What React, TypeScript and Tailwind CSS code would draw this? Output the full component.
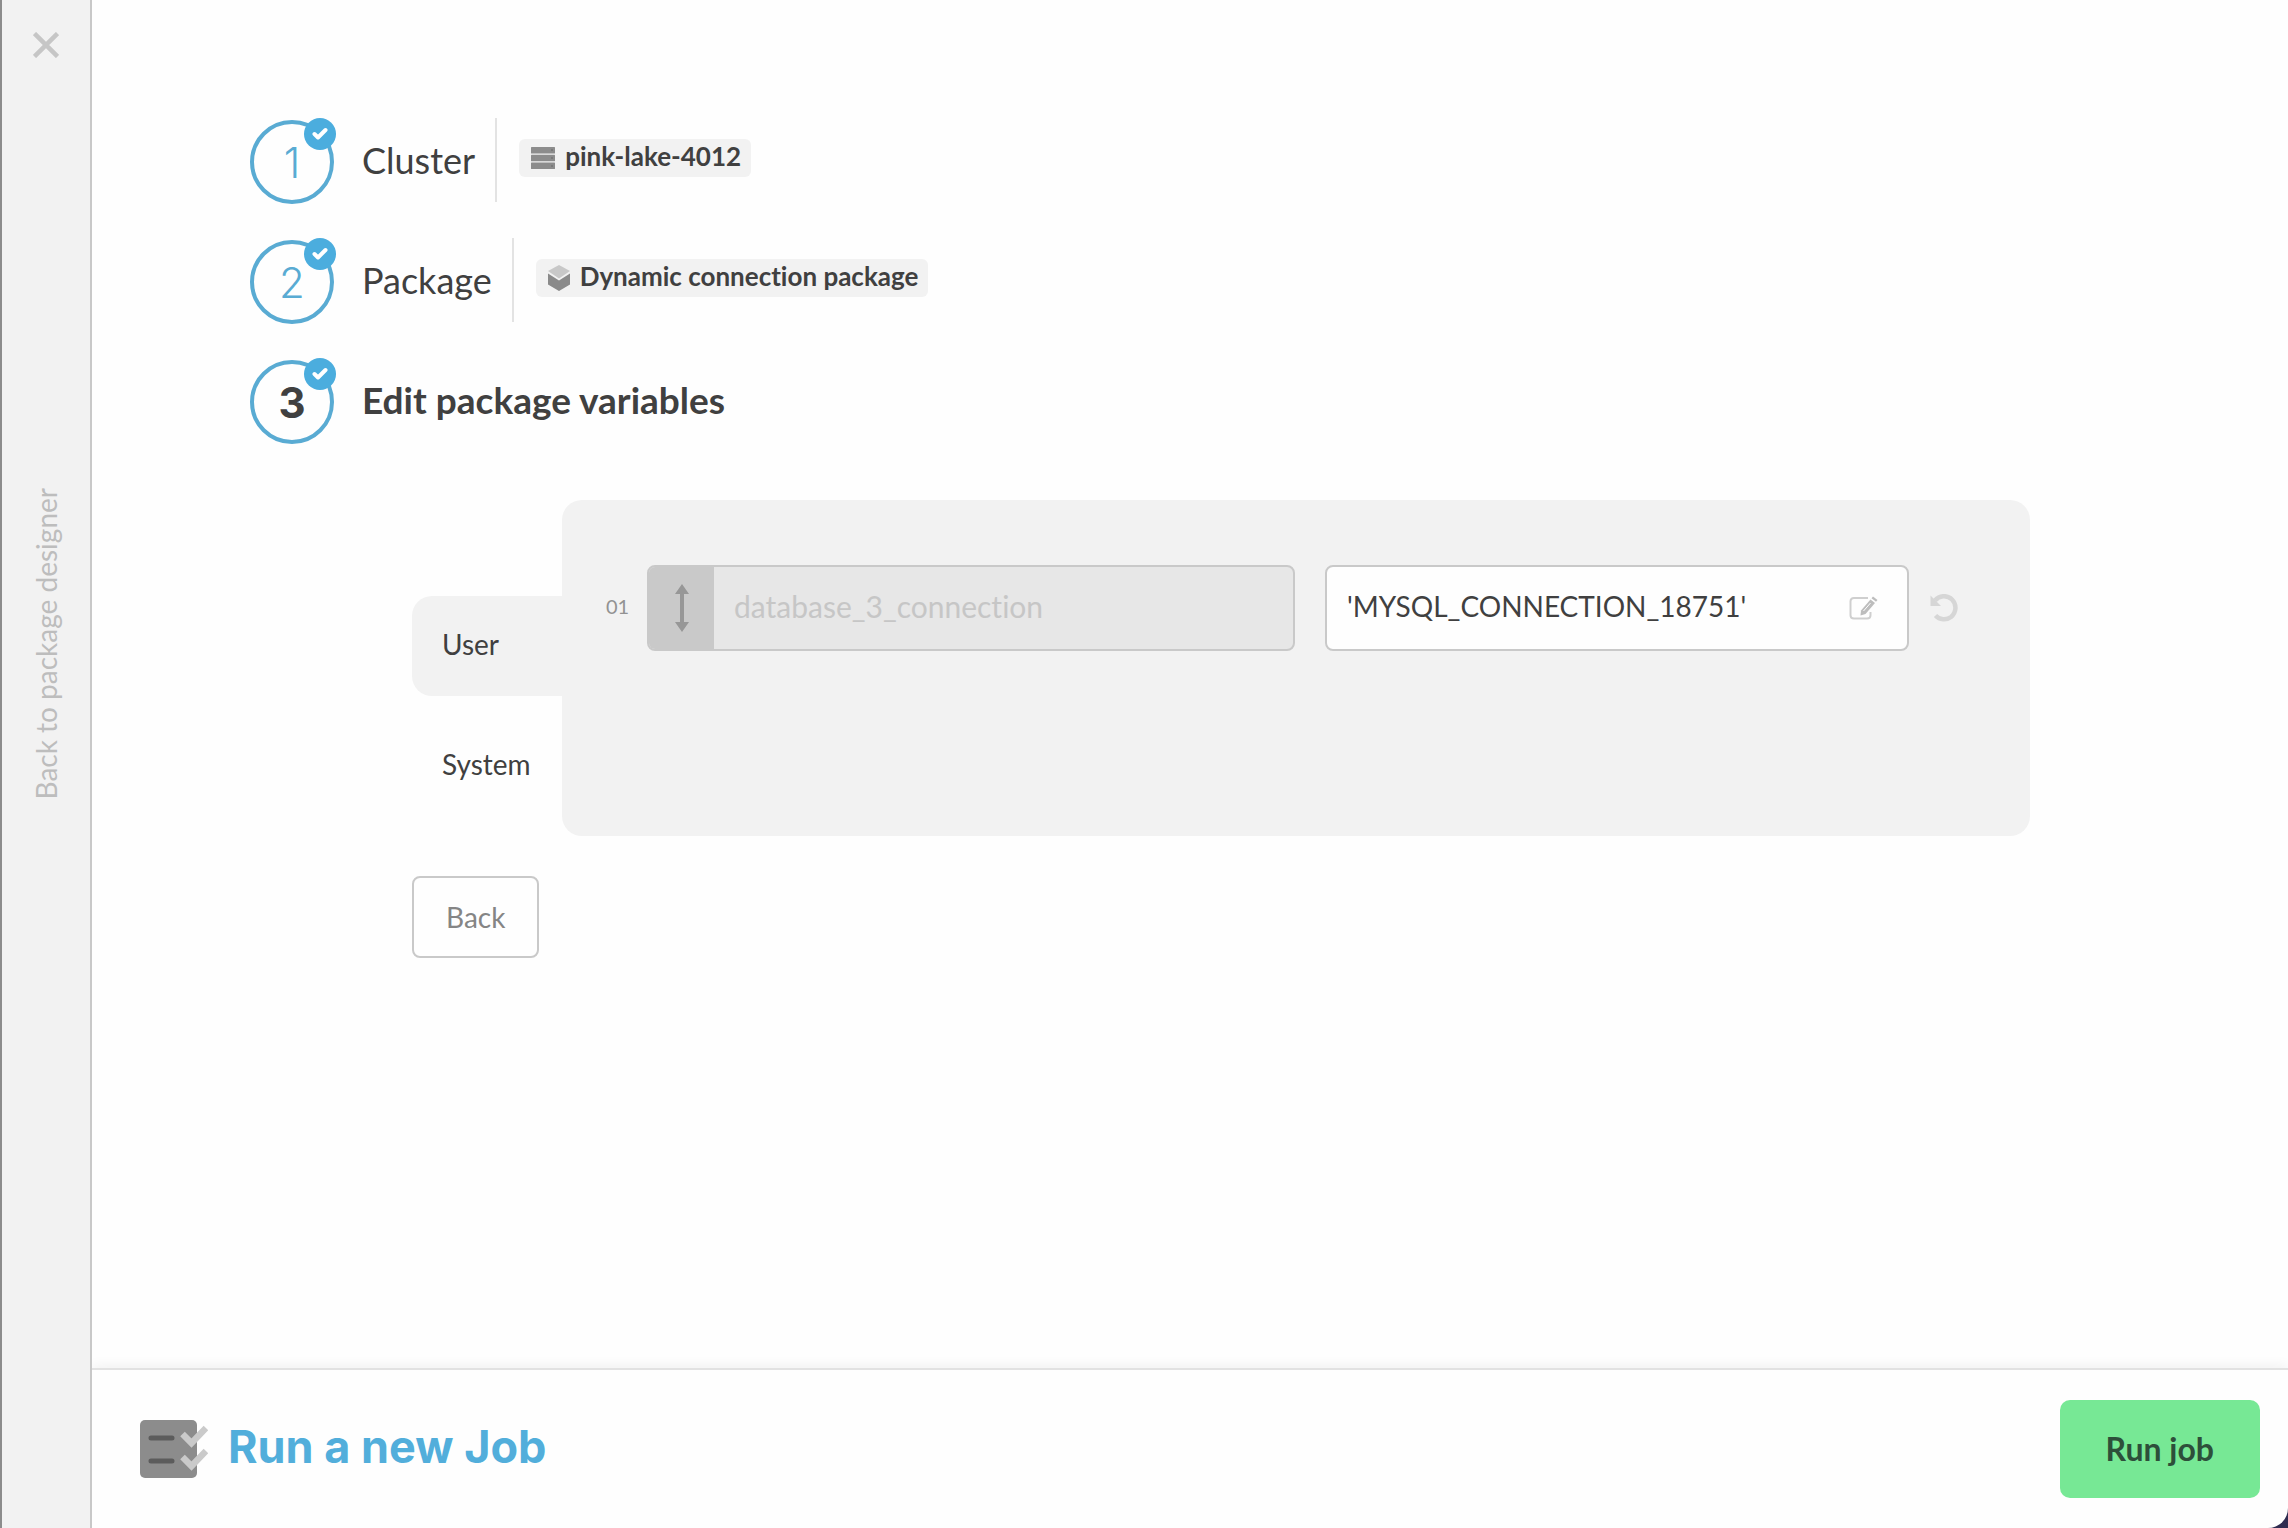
import { useState } from 'react';
import type { ReactNode } from 'react';

const TABS = ['User', 'System'];

const VARIABLES: Record<string, { name: string; value: string }[]> = {
  User: [{ name: 'database_3_connection', value: "'MYSQL_CONNECTION_18751'" }],
  System: [],
};

function CloseIcon() {
  return (
    <svg width="26" height="26" viewBox="0 0 26 26" fill="none" stroke="#c6c6c6" strokeWidth="4.500">
      <path d="M1.5 1.5 L24.5 24.5 M24.5 1.5 L1.5 24.5" />
    </svg>
  );
}

function ClusterIcon() {
  return (
    <svg width="24" height="22" viewBox="0 0 24 22" fill="#8c8c8c">
      <rect width="24" height="6.500" rx="0.5" />
      <rect y="7.750" width="24" height="6.500" rx="0.5" />
      <rect y="15.500" width="24" height="6.500" rx="0.5" />
      <path d="M20 3h2M20 11h2M20 19h2" stroke="#7a7a7a" strokeWidth="2" />
    </svg>
  );
}

function PackageIcon() {
  return (
    <svg width="22" height="26" viewBox="0 0 22 26">
      <path d="M11 0 L22 6 L11 13.5 L0 6 Z" fill="#c8c8c8" />
      <path d="M0 8.5 L11 15.500 L22 8.5 V19.5 L11 26 L0 19.5 Z" fill="#8a8a8a" />
    </svg>
  );
}

function DragIcon() {
  return (
    <svg width="14" height="48" viewBox="0 0 14 48" fill="#979797">
      <path d="M7 0 L14 10 H9 V38 H14 L7 48 L0 38 H5 V10 H0 Z" />
    </svg>
  );
}

function EditIcon() {
  return (
    <svg width="30" height="24" viewBox="0 0 30 24" fill="none">
      <path d="M19 2 H5 Q1.5 2 1.5 5.500 V19 Q1.500 22.500 5 22.500 H18 Q21.500 22.500 21.500 19 V16" stroke="#cfcfcf" strokeWidth="2" />
      <path d="M21.500 3.500 L26 7 L16.500 18 L11.500 19.500 L12 14.500 Z" fill="#bdbdbd" />
      <path d="M22.500 2.300 L24 0.500 L28.500 4 L27 5.800 Z" fill="#bdbdbd" />
      <path d="M14.500 15 L21.500 7" stroke="#fff" strokeWidth="1" />
    </svg>
  );
}

function UndoIcon() {
  return (
    <svg width="28" height="28" viewBox="0 0 28 28" fill="none">
      <path d="M5 6.500 C9 1.500 17 0.500 22 5.500 C27 10.500 26.500 18.500 21 23 C16.500 26.500 9.500 26 5.500 21.500" stroke="#d6d6d6" strokeWidth="4.500" />
      <path d="M0.500 1.500 V12 H11 Z" fill="#d6d6d6" />
    </svg>
  );
}

function JobIcon() {
  return (
    <svg width="68" height="58" viewBox="0 0 68 58" fill="none">
      <rect width="57" height="58" rx="5" fill="#8c8c8c" />
      <path d="M11 18 H32 M11 41 H32" stroke="#5c5c5c" strokeWidth="5" strokeLinecap="round" />
      <path d="M42.500 14 L51.500 23 L66 8" stroke="#cacaca" strokeWidth="6.500" />
      <path d="M42.500 37 L51.500 46 L66 31" stroke="#cacaca" strokeWidth="6.500" />
    </svg>
  );
}

function StepNumber({ number, active }: { number: number; active?: boolean }) {
  return (
    <div className="relative flex size-[84px] shrink-0 items-center justify-center rounded-full border-4 border-[#59abd3] font-['Inter',sans-serif] text-[42px]">
      <span className={active ? 'font-bold text-[#404040]' : 'font-light text-[#59abd3]'}>{number}</span>
      <span className="absolute -top-[6px] -right-[6px] flex size-8 items-center justify-center rounded-full bg-[#4badde]">
        <svg width="16" height="14" viewBox="0 0 16 14" fill="none" stroke="#fff" strokeWidth="4" strokeLinecap="round" strokeLinejoin="round">
          <path d="M2.500 7 L6 10.500 L13.500 3" />
        </svg>
      </span>
    </div>
  );
}

function Step({ number, title, icon, value }: { number: number; title: string; icon: ReactNode; value: string }) {
  return (
    <li className="flex items-center">
      <StepNumber number={number} />
      <h2 className="ml-7 pb-1 text-[36px] leading-[48px]">{title}</h2>
      <div className="-mt-1 ml-5 flex h-[84px] items-center border-l-2 border-[#e3e3e3] pb-1 pl-[22px]">
        <span className="flex h-[38px] items-center gap-[10px] rounded-md bg-[#f2f2f2] pr-[10px] pl-3 text-[26px] font-bold">
          {icon}
          <span className="pb-1">{value}</span>
        </span>
      </div>
    </li>
  );
}

export default function App() {
  const [tab, setTab] = useState('User');

  return (
    <div className="bg-[#2f2c50] font-['Lato',sans-serif] text-[#404040] [font-variant-ligatures:none]">
      <div className="flex min-h-screen overflow-hidden rounded-br-[20px] bg-[#fefefe]">
        {/* Side strip that closes the dialog */}
        <aside className="flex w-[92px] shrink-0 flex-col items-center border-r-2 border-l-2 border-r-[#c8c8c8] border-l-[#8c8c8c] bg-[#f2f2f2] pt-8">
          <button type="button" aria-label="Close">
            <CloseIcon />
          </button>
          <a href="#designer" className="mt-[430px] rotate-180 text-[28px] leading-8 text-[#bdbdbd] [writing-mode:vertical-rl]">
            Back to package designer
          </a>
        </aside>

        <div className="flex min-w-0 flex-1 flex-col overflow-hidden">
          <main className="flex-1 pt-[120px] pr-[258px] pb-16 pl-[158px]">
            <ol className="flex flex-col gap-9">
              <Step number={1} title="Cluster" icon={<ClusterIcon />} value="pink-lake-4012" />
              <Step number={2} title="Package" icon={<PackageIcon />} value="Dynamic connection package" />
              <li className="flex items-center">
                <StepNumber number={3} active />
                <h2 className="ml-7 pb-1 text-[37px] leading-[48px] font-bold">Edit package variables</h2>
              </li>
            </ol>

            <section className="mt-14 ml-[162px]">
              <div className="flex">
                <div role="tablist" aria-orientation="vertical" className="flex w-[150px] shrink-0 flex-col gap-5 pt-24">
                  {TABS.map((name) => (
                    <button
                      key={name}
                      type="button"
                      role="tab"
                      aria-selected={tab === name}
                      onClick={() => setTab(name)}
                      className={`h-[100px] rounded-l-[20px] pb-1 pl-[30px] text-left text-[28px] ${tab === name ? 'bg-[#f2f2f2]' : ''}`}
                    >
                      {name}
                    </button>
                  ))}
                </div>

                <div role="tabpanel" className="min-h-[336px] flex-1 rounded-[20px] bg-[#f2f2f2] pt-[65px] pr-[72px] pl-11">
                  {VARIABLES[tab].map((variable, i) => (
                    <div key={variable.name} className="flex items-center">
                      <span className="w-[41px] pb-1 text-[20px] text-[#929292]">{String(i + 1).padStart(2, '0')}</span>
                      <div className="flex h-[86px] flex-[644] overflow-hidden rounded-lg border-2 border-[#c9c9c9] bg-[#e7e7e7]">
                        <span className="flex w-[65px] shrink-0 items-center justify-center bg-[#c9c9c9]">
                          <DragIcon />
                        </span>
                        <input
                          aria-label="Variable name"
                          disabled
                          defaultValue={variable.name}
                          className="min-w-0 flex-1 px-5 pb-1 text-[30px] text-[#c6c6c6]"
                        />
                      </div>
                      <div className="ml-[30px] flex h-[86px] flex-[552] items-center rounded-lg border-2 border-[#c9c9c9] bg-[#fefefe] pr-7">
                        <input
                          aria-label="Variable value"
                          defaultValue={variable.value}
                          className="min-w-0 flex-1 px-5 pb-1 text-[28px] outline-none"
                        />
                        <button type="button" aria-label="Edit value">
                          <EditIcon />
                        </button>
                      </div>
                      <button type="button" aria-label="Reset value" className="ml-[21px]">
                        <UndoIcon />
                      </button>
                    </div>
                  ))}
                </div>
              </div>

              <button type="button" className="mt-10 h-[82px] rounded-lg border-2 border-[#c9c9c9] px-8 text-[28px] text-[#858585]">
                Back
              </button>
            </section>
          </main>

          <footer className="flex h-40 items-center border-t-2 border-[#e2e2e2] pr-7 pl-12 shadow-[0_-2px_12px_rgba(0,0,0,0.06)]">
            <JobIcon />
            <h1 className="ml-5 flex-1 pb-1 font-['Inter',sans-serif] text-[45px] font-bold text-[#52aedb]">Run a new Job</h1>
            <button type="button" className="h-[98px] rounded-[10px] bg-[#77e895] px-[46px] text-[32px] font-bold text-[#2d4f3a]">
              Run job
            </button>
          </footer>
        </div>
      </div>
    </div>
  );
}
